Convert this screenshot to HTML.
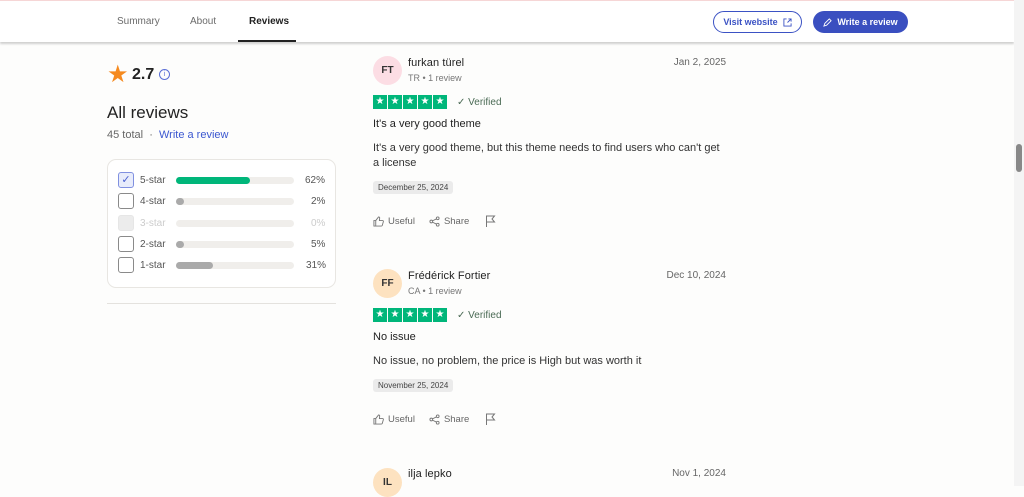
<!DOCTYPE html>
<html><head><meta charset="utf-8"><style>
*{margin:0;padding:0;box-sizing:border-box}
body{width:1024px;height:486px;overflow:hidden;background:#fdfdfc;font-family:"Liberation Sans",sans-serif;color:#1c1c1c;position:relative}
.a{position:absolute;white-space:nowrap}
.nav{position:absolute;left:0;top:0;width:1014px;height:42px;background:#fff;border-top:1px solid #f6d6d6;box-shadow:0 2px 2px rgba(0,0,0,.18)}
.tab{font-size:10px;color:#6b6b6b;top:15px}
.btn{position:absolute;top:10px;height:22px;border-radius:11px;font-size:9px;font-weight:bold;display:flex;align-items:center;justify-content:center;gap:5px}
.cb{position:absolute;left:118px;width:16px;height:16px;border:1px solid #8a8a8a;border-radius:3px;background:#fff}
.lbl{left:140px;font-size:10px;color:#555}
.bar{position:absolute;left:176px;width:118px;height:7px;border-radius:4px;background:#f0eeeb}
.bar i{position:absolute;left:0;top:0;height:7px;border-radius:4px;background:#aaa}
.pct{font-size:10px;color:#555}
.av{position:absolute;left:373px;width:29px;height:29px;border-radius:50%;font-size:10px;font-weight:bold;color:#333;display:flex;align-items:center;justify-content:center}
.nm{left:408px;font-size:11px;color:#222;letter-spacing:.1px}
.mt{left:408px;font-size:9px;color:#777}
.dt{right:298px;font-size:10px;color:#666}
.st{position:absolute;left:373px;display:flex;gap:1px}
.st span{width:14px;height:14px;background:#00b67a;color:#fff;font-size:10px;line-height:14px;text-align:center}
.ver{left:457px;font-size:10px;color:#4b6b55}
.tt{left:373px;font-size:11px;color:#222}
.bd{left:373px;font-size:11px;color:#333;line-height:15px}
.chip{position:absolute;left:373px;height:13px;padding:0 5px;background:#ebebeb;border-radius:3px;font-size:8px;color:#444;line-height:13px}
.act{position:absolute;left:373px;display:flex;align-items:center;font-size:9.5px;color:#666}
.act svg{stroke:#777;fill:none;stroke-width:1}
</style></head><body>
<div class="nav">
<div class="a tab" style="left:117px">Summary</div>
<div class="a tab" style="left:190px">About</div>
<div class="a tab" style="left:249px;color:#222;font-weight:bold">Reviews</div>
<div style="position:absolute;left:238px;top:39px;width:58px;height:2px;background:#222"></div>
<div class="btn" style="left:713px;width:89px;border:1px solid #3b52c4;color:#3b52c4;background:#fff">Visit website <svg width="9" height="9" viewBox="0 0 10 10" fill="none" stroke="#3b52c4" stroke-width="1"><path d="M4 1H1v8h8V6M6 1h3v3M9 1L5 5"/></svg></div>
<div class="btn" style="left:813px;width:95px;background:#3a4fc0;color:#fff"><svg width="9" height="9" viewBox="0 0 10 10" fill="none" stroke="#fff" stroke-width="1"><path d="M1 9l1-3 5-5 2 2-5 5z"/></svg>Write a review</div>
</div>
<div style="position:absolute;right:0;top:0;width:10px;height:486px;background:#f4f4f4"></div>
<div style="position:absolute;left:1016px;top:144px;width:6px;height:28px;border-radius:3px;background:#888"></div>
<div class="a" style="left:107px;top:63px;font-size:24px;color:#f58a1f;line-height:24px">★</div>
<div class="a" style="left:132px;top:66px;font-size:16px;font-weight:bold;color:#222">2.7</div>
<div class="a" style="left:159px;top:69px;width:11px;height:11px;border:1px solid #5b6fd6;border-radius:50%;font-size:7px;color:#5b6fd6;text-align:center;line-height:9px">i</div>
<div class="a" style="left:107px;top:103px;font-size:17px;color:#222">All reviews</div>
<div class="a" style="left:107px;top:129px;font-size:11px;color:#666">45 total &nbsp;·&nbsp; <span style="color:#3b57d0">Write a review</span></div>
<div style="position:absolute;left:107px;top:159px;width:229px;height:129px;border:1px solid #e8e6e2;border-radius:9px;background:#fff"></div>
<div class="cb" style="top:172px;border-color:#8090e0;background:#e8ecfb;color:#4a5fd0;font-size:11px;text-align:center;line-height:14px">✓</div>
<div class="a lbl" style="top:175px">5-star</div><div class="bar" style="top:177px"><i style="width:74px;background:#00b67a"></i></div><div class="a pct" style="top:175px;left:305px">62%</div>
<div class="cb" style="top:193px"></div>
<div class="a lbl" style="top:196px">4-star</div><div class="bar" style="top:198px"><i style="width:8px"></i></div><div class="a pct" style="top:196px;left:311px">2%</div>
<div class="cb" style="top:215px;border-color:#e6e6e6;background:#ececec"></div>
<div class="a lbl" style="top:218px;color:#ccc">3-star</div><div class="bar" style="top:220px"></div><div class="a pct" style="top:218px;left:311px;color:#ccc">0%</div>
<div class="cb" style="top:236px"></div>
<div class="a lbl" style="top:239px">2-star</div><div class="bar" style="top:241px"><i style="width:8px"></i></div><div class="a pct" style="top:239px;left:311px">5%</div>
<div class="cb" style="top:257px"></div>
<div class="a lbl" style="top:260px">1-star</div><div class="bar" style="top:262px"><i style="width:37px"></i></div><div class="a pct" style="top:260px;left:306px">31%</div>
<div style="position:absolute;left:107px;top:303px;width:229px;height:1px;background:#e4e2de"></div>

<div class="av" style="top:56px;background:#fcdde4">FT</div>
<div class="a nm" style="top:57px">furkan türel</div>
<div class="a mt" style="top:73px">TR • 1 review</div>
<div class="a dt" style="top:57px">Jan 2, 2025</div>
<div class="st" style="top:95px"><span>★</span><span>★</span><span>★</span><span>★</span><span>★</span></div>
<div class="a ver" style="top:97px">✓ Verified</div>
<div class="a tt" style="top:118px">It's a very good theme</div>
<div class="a bd" style="top:141px">It's a very good theme, but this theme needs to find users who can't get<br>a license</div>
<div class="chip" style="top:181px">December 25, 2024</div>
<div class="act" style="top:215px"><svg width="11" height="11" viewBox="0 0 12 12"><path d="M1 5h2v6H1zM3 5l3-4c1 0 1.5.5 1.2 1.8L7 5h3.5c.6 0 1 .5.8 1.1l-1.2 4.2c-.2.4-.5.7-1 .7H3"/></svg><span style="margin-left:4px">Useful</span><svg style="margin-left:14px" width="11" height="11" viewBox="0 0 12 12"><circle cx="2.5" cy="6" r="1.5"/><circle cx="9.5" cy="2.5" r="1.5"/><circle cx="9.5" cy="9.5" r="1.5"/><path d="M4 5.2l4-2M4 6.8l4 2"/></svg><span style="margin-left:4px">Share</span><svg style="margin-left:16px" width="11" height="12" viewBox="0 0 11 12"><path d="M1.5 12V1h8L7 4l2.5 3h-8"/></svg></div>

<div class="av" style="top:269px;background:#fde2c0">FF</div>
<div class="a nm" style="top:270px">Frédérick Fortier</div>
<div class="a mt" style="top:286px">CA • 1 review</div>
<div class="a dt" style="top:270px">Dec 10, 2024</div>
<div class="st" style="top:308px"><span>★</span><span>★</span><span>★</span><span>★</span><span>★</span></div>
<div class="a ver" style="top:310px">✓ Verified</div>
<div class="a tt" style="top:331px">No issue</div>
<div class="a bd" style="top:354px">No issue, no problem, the price is High but was worth it</div>
<div class="chip" style="top:379px">November 25, 2024</div>
<div class="act" style="top:413px"><svg width="11" height="11" viewBox="0 0 12 12"><path d="M1 5h2v6H1zM3 5l3-4c1 0 1.5.5 1.2 1.8L7 5h3.5c.6 0 1 .5.8 1.1l-1.2 4.2c-.2.4-.5.7-1 .7H3"/></svg><span style="margin-left:4px">Useful</span><svg style="margin-left:14px" width="11" height="11" viewBox="0 0 12 12"><circle cx="2.5" cy="6" r="1.5"/><circle cx="9.5" cy="2.5" r="1.5"/><circle cx="9.5" cy="9.5" r="1.5"/><path d="M4 5.2l4-2M4 6.8l4 2"/></svg><span style="margin-left:4px">Share</span><svg style="margin-left:16px" width="11" height="12" viewBox="0 0 11 12"><path d="M1.5 12V1h8L7 4l2.5 3h-8"/></svg></div>

<div class="av" style="top:468px;background:#fde2c0">IL</div>
<div class="a nm" style="top:468px">ilja lepko</div>
<div class="a dt" style="top:468px">Nov 1, 2024</div>
</body></html>
